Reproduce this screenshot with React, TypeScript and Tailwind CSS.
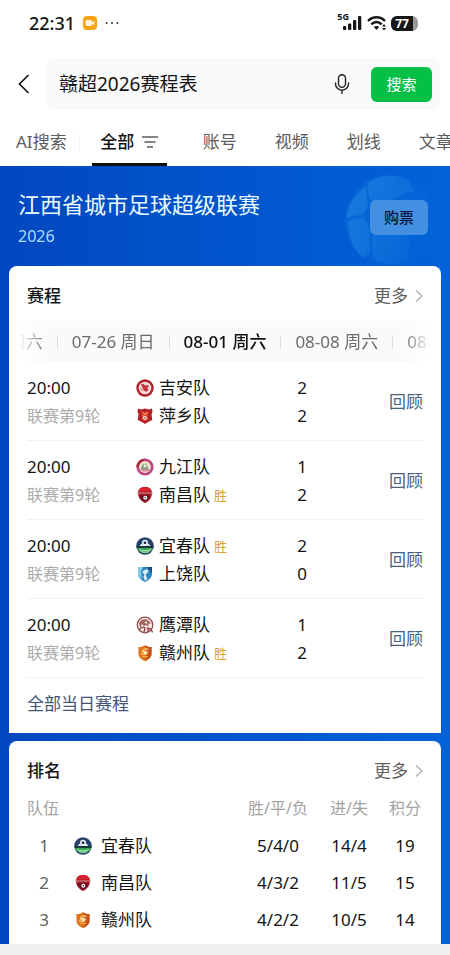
import type { ReactNode } from 'react';

type TeamName = '吉安队' | '萍乡队' | '九江队' | '南昌队' | '宜春队' | '上饶队' | '鹰潭队' | '赣州队';

interface Side {
  team: TeamName;
  score: number;
  won?: boolean;
}

interface Match {
  time: string;
  round: string;
  sides: Side[];
}

const tabs = ['账号', '视频', '划线', '文章'];

const dates = ['07-25 周六', '07-26 周日', '08-01 周六', '08-08 周六', '08-09 周日'];

const matches: Match[] = [
  { time: '20:00', round: '联赛第9轮', sides: [{ team: '吉安队', score: 2 }, { team: '萍乡队', score: 2 }] },
  { time: '20:00', round: '联赛第9轮', sides: [{ team: '九江队', score: 1 }, { team: '南昌队', score: 2, won: true }] },
  { time: '20:00', round: '联赛第9轮', sides: [{ team: '宜春队', score: 2, won: true }, { team: '上饶队', score: 0 }] },
  { time: '20:00', round: '联赛第9轮', sides: [{ team: '鹰潭队', score: 1 }, { team: '赣州队', score: 2, won: true }] },
];

const standings: { team: TeamName; record: string; goals: string; points: number }[] = [
  { team: '宜春队', record: '5/4/0', goals: '14/4', points: 19 },
  { team: '南昌队', record: '4/3/2', goals: '11/5', points: 15 },
  { team: '赣州队', record: '4/2/2', goals: '10/5', points: 14 },
];

const badges: Record<TeamName, ReactNode> = {
  吉安队: (
    <>
      <circle cx="9" cy="9" r="8.700" fill="#b3202c" />
      <circle cx="9" cy="9" r="6.300" fill="#f3dcda" />
      <path d="M5 5c2-1 3 .5 4.500 1.500L12 6l1 2-2 .5 1.500 2-2 2.500-2.500-1.500L6.500 9z" fill="#c43540" />
      <path d="M4.500 9.500l2 2.500M7.500 9.800l2.500-.8 1 1.500" stroke="#c43540" strokeWidth=".9" fill="none" />
    </>
  ),
  萍乡队: (
    <>
      <path d="M2 1.500l3 1 4-1 4 1 3-1 .5 3-1 3 .8 5.500-4.300 2-3 2-3-2-4.300-2 .8-5.500-1-3z" fill="#b32025" />
      <path d="M5 4l3 2 3-2 2 2-1.500 3 1 3-3.500 2-3.500-2 1-3z" fill="#e0452f" />
      <path d="M7 5l2 3 2-3M6 8l1.500 2" stroke="#f3b07d" strokeWidth=".8" fill="none" />
      <circle cx="9" cy="11" r="2" fill="#fbe3dc" />
      <circle cx="9" cy="11" r=".8" fill="#8d1a1d" />
    </>
  ),
  九江队: (
    <>
      <circle cx="9" cy="9" r="8.600" fill="#c0417f" />
      <path d="M9 .4a8.600 8.600 0 0 0-8.600 8.600h3z" fill="#a52a35" />
      <circle cx="9" cy="9" r="6" fill="#eadfc9" />
      <path d="M5 10l2-4 2 1 1-2 2 5 1 2H5z" fill="#7d9a7b" />
      <path d="M4 11h10l-1.500 2.500h-6z" fill="#d68b9c" />
      <circle cx="9" cy="8" r="1.500" fill="#f8eedb" />
    </>
  ),
  南昌队: (
    <>
      <path d="M9 1c4 0 6.500 2 7 5.500 0 5-2.500 8.500-7 10.500-4.500-2-7-5.500-7-10.500C2.500 3 5 1 9 1z" fill="#a5182b" />
      <path d="M9 1c4 0 6.300 2 6.800 4.500H2.200C2.700 3 5 1 9 1z" fill="#d6232f" />
      <path d="M1.500 6h15v2h-15z" fill="#dd8583" />
      <path d="M2.500 7h13" stroke="#8d1526" strokeWidth=".8" />
      <path d="M4 9.500h10c-.5 3-2.500 5-5 6-2.500-1-4.500-3-5-6z" fill="#5a101f" />
      <circle cx="9.300" cy="11.800" r="2" fill="#fff" />
      <circle cx="9.300" cy="11.800" r=".8" fill="#5a101f" />
    </>
  ),
  宜春队: (
    <>
      <circle cx="9" cy="9" r="8.700" fill="#27406b" />
      <path d="M.8 10.500h16.400A8.700 8.700 0 0 1 .8 10.500z" fill="#3aa655" />
      <circle cx="9" cy="5.800" r="3" fill="#e9f0f5" />
      <path d="M9 4.300l1.500 1-.6 1.700H8.100l-.6-1.700z" fill="#1f2f55" />
      <path d="M3.500 9l2-2.500 2 1.500h3l2-1.500 2 2.500z" fill="#dfe9f2" />
      <path d="M.5 9h17v1.800H.5z" fill="#12352f" />
      <path d="M3 12.500c4 1.500 8 1.500 12 0M5 14.500c3 1 5 1 8 0" stroke="#b9eac2" strokeWidth=".9" fill="none" />
    </>
  ),
  上饶队: (
    <>
      <path d="M2 2h14v7c0 3.500-3 6-7 8-4-2-7-4.500-7-8z" fill="#2c86c4" />
      <path d="M2 2h5L5 7l1 7C3.500 12.500 2 11 2 9z" fill="#7fcbe8" />
      <path d="M7 6l4-2 1.500 2-1.500 2.500-1.500 1 2 4.500-2.500 2L7.500 12l1-3-2-1z" fill="#d9f2fb" />
      <path d="M11 2h5v6l-3-3z" fill="#1a4f8c" />
    </>
  ),
  鹰潭队: (
    <>
      <circle cx="9" cy="9" r="7.800" fill="#f6e9e6" stroke="#8c4a48" strokeWidth="1.200" />
      <path d="M3 7c2-4 7-5 10-2l2 3-3-.5 1 3-3-1.500-2 1L6 8l-2 4z" fill="#a2635f" />
      <path d="M3 14c2-3 4-3.500 6-2l-1 4M11 12l4 1 1.500 3.500M12 12v4" stroke="#903c3b" strokeWidth="1.300" fill="none" />
      <circle cx="10" cy="6.500" r="1.100" fill="#fff" />
    </>
  ),
  赣州队: (
    <>
      <path d="M2.500 3c2.500 0 4.500-.5 6.500-1.800C11 2.500 13 3 15.500 3v7c0 3.500-3 5.500-6.500 7-3.500-1.500-6.500-3.500-6.500-7z" fill="#e0741d" />
      <path d="M9 1.200C11 2.500 13 3 15.500 3v7c0 3.500-3 5.500-6.500 7l3-7z" fill="#c4511a" />
      <path d="M12.500 5.500c-3-1.500-6 0-6 2.500 2-1 4-.5 5 .5-1 2-4 2-6.500 1.500" stroke="#ffd98a" strokeWidth="1.200" fill="none" />
      <circle cx="9" cy="9" r="1.300" fill="#fff1cf" />
      <path d="M6 12.500h6" stroke="#f6b04a" strokeWidth="1" />
    </>
  ),
};

function TeamBadge({ team }: { team: TeamName }) {
  return (
    <svg className="size-[18px] shrink-0" viewBox="0 0 18 18" aria-hidden="true">
      {badges[team]}
    </svg>
  );
}

function StatusBar() {
  return (
    <div className="flex h-[46px] items-center justify-between pr-8 pl-[29px]">
      <div className="flex items-center">
        <span className="text-lg leading-6 font-medium">22:31</span>
        <svg className="ml-2 size-[14px]" viewBox="0 0 14 14" aria-hidden="true">
          <rect width="14" height="14" rx="4" fill="#f5a414" />
          <rect x="2.500" y="4" width="6.500" height="6" rx="1.500" fill="#fff6dc" />
          <path d="M9 6.500l2.500-1.700v4.400L9 7.500z" fill="#fff6dc" />
        </svg>
        <svg className="ml-2 h-1 w-[14px]" viewBox="0 0 14 4" fill="#333" aria-hidden="true">
          <circle cx="1.500" cy="2" r="1" />
          <circle cx="7" cy="2" r="1" />
          <circle cx="12.500" cy="2" r="1" />
        </svg>
      </div>
      <div className="flex items-center">
        <span className="mb-3 text-[9px] leading-3 font-bold">5G</span>
        <svg className="-ml-1.5 h-4 w-5" viewBox="0 0 20 16" fill="#181818" aria-hidden="true">
          <rect x="0" y="11" width="3.300" height="4" rx="1" />
          <rect x="5" y="8.500" width="3.300" height="6.500" rx="1" />
          <rect x="10" y="5" width="3.300" height="10" rx="1" />
          <rect x="15" y="1" width="3.300" height="14" rx="1" />
        </svg>
        <svg className="ml-1 h-4 w-5" viewBox="0 0 20 16" fill="none" stroke="#181818" aria-hidden="true">
          <path d="M1 6c4.800-5 12.200-5 17 0" strokeWidth="2.400" />
          <path d="M4.300 9.300c3-3 7.400-3 10.400 0" strokeWidth="2.400" />
          <path d="M9.500 15L6.800 12c1.500-1.400 3.900-1.400 5.400 0z" fill="#181818" stroke="none" />
          <path d="M15 11.500l2-2.500 2 2.500zM15 13l2 2.500 2-2.500z" fill="#181818" stroke="none" />
        </svg>
        <div className="ml-1 flex h-[15px] w-[27px] overflow-hidden rounded-md bg-[#9a9a9a]">
          <span className="w-[22px] bg-[#181818] text-center text-xs leading-[15px] font-bold text-white">77</span>
        </div>
      </div>
    </div>
  );
}

function SearchBar() {
  return (
    <div className="flex items-center pt-3 pr-[10px] pb-2 pl-[18px]">
      <button type="button" aria-label="返回" className="shrink-0">
        <svg className="h-5 w-3" viewBox="0 0 12 20" fill="none" stroke="#181818" strokeWidth="1.700" aria-hidden="true">
          <path d="M10.500 1L1.500 10l9 9" />
        </svg>
      </button>
      <form className="ml-[17px] flex h-[52px] min-w-0 flex-1 items-center rounded-lg bg-[#fafafa] pr-2 pl-3">
        <input
          type="text"
          aria-label="搜索"
          defaultValue="赣超2026赛程表"
          className="min-w-0 flex-1 bg-transparent text-[19px] leading-7 outline-none"
        />
        <button type="button" aria-label="语音输入">
          <svg className="h-5 w-4" viewBox="0 0 16 20" fill="none" stroke="#222" strokeWidth="1.400" aria-hidden="true">
            <rect x="4.500" y=".8" width="7" height="12.400" rx="3.500" />
            <path d="M1.500 8.500v1.200a6.500 6.500 0 0 0 13 0V8.500M8 16.200V20" />
          </svg>
        </button>
        <button type="button" className="ml-[21px] h-[35px] w-[61px] rounded-md bg-[#05c047] text-[15px] text-white">
          搜索
        </button>
      </form>
    </div>
  );
}

function TabBar() {
  return (
    <nav className="flex h-12 items-center overflow-hidden pl-4 text-[17px] whitespace-nowrap text-[#5c5c5c]">
      <button type="button" className="shrink-0">AI搜索</button>
      <span className="ml-3 h-4 w-px shrink-0 bg-[#f4f4f4]" />
      <button
        type="button"
        className="ml-3 flex h-12 w-[75px] shrink-0 items-center justify-center gap-2 border-y-3 border-t-transparent border-b-[#111] font-medium text-[#111]"
      >
        全部
        <svg className="h-3 w-4" viewBox="0 0 16 12" stroke="#5c5c5c" strokeWidth="1.400" aria-hidden="true">
          <path d="M0 1h16M2.500 6h11M5 11h6" />
        </svg>
      </button>
      <div className="ml-9 flex gap-[38px]">
        {tabs.map((tab) => (
          <button key={tab} type="button" className="shrink-0">
            {tab}
          </button>
        ))}
      </div>
    </nav>
  );
}

function Football() {
  return (
    <svg className="absolute top-2 right-3 size-[94px]" viewBox="0 0 94 94" aria-hidden="true">
      <defs>
        <linearGradient id="ball" gradientUnits="userSpaceOnUse" x1="0" y1="20" x2="90" y2="60">
          <stop offset="0" stopColor="#2d9bea" stopOpacity=".4" />
          <stop offset="1" stopColor="#2d9bea" stopOpacity=".03" />
        </linearGradient>
      </defs>
      <circle cx="47" cy="47" r="46" fill="url(#ball)" opacity=".4" />
      <g fill="url(#ball)">
        <path d="M25 8C37 0 53 0 65 7l5 11c-9 0-14 3-20 7-8 3-16 3-24 1-2-6-3-12-1-18z" />
        <path d="M23 12C12 19 4 31 2 44c5-2 11-3 17-3 3-5 5-9 5-14-2-5-2-10-1-15z" />
        <path d="M4 48c5-3 10-4 15-4 4 4 6 8 7 13v21l-7 6C9 75 4 62 4 48z" />
        <path d="M29 58c12-3 23-3 34 0 3 9 3 19 0 29-12 5-24 4-34-3-1-9-1-18 0-26z" />
      </g>
    </svg>
  );
}

function CardHeader({ title }: { title: string }) {
  return (
    <div className="flex items-center justify-between px-[18px] pt-4 text-[17px] leading-7">
      <h2 className="font-medium">{title}</h2>
      <a href="#more" className="flex items-center gap-[7px] text-[#5f5f5f]">
        更多
        <svg className="h-3 w-2" viewBox="0 0 8 12" fill="none" stroke="#b0b0b0" strokeWidth="1.400" aria-hidden="true">
          <path d="M1 .5L7 6l-6 5.500" />
        </svg>
      </a>
    </div>
  );
}

function DateStrip() {
  return (
    <div className="mx-2.5 mt-[11px] flex h-[41px] items-center justify-center overflow-hidden bg-[#fafafa] text-[17px] whitespace-nowrap text-[#6b6b6b] [mask-image:linear-gradient(to_right,transparent,black_28px,black_calc(100%-28px),transparent)]">
      {dates.map((date, i) => (
        <div key={date} className="flex shrink-0 items-center">
          {i > 0 && <span className="mx-3.5 h-3.5 w-px bg-[#dedede]" />}
          <button type="button" className={date === '08-01 周六' ? 'font-medium text-[#111]' : ''}>
            {date}
          </button>
        </div>
      ))}
    </div>
  );
}

function MatchRow({ match }: { match: Match }) {
  return (
    <li className="flex items-center border-b border-[#f0f0f0] pt-3 pb-2.5 text-[17px] leading-7">
      <div className="w-[109px]">
        <p>{match.time}</p>
        <p className="text-base leading-7 text-[#ababab]">{match.round}</p>
      </div>
      <div className="flex-1">
        {match.sides.map((side) => (
          <div key={side.team} className="flex items-center">
            <TeamBadge team={side.team} />
            <span className="ml-[5px]">{side.team}</span>
            {side.won && <span className="ml-1 text-[13px] leading-7 text-[#dba035]">胜</span>}
          </div>
        ))}
      </div>
      <div className="w-6 text-center">
        {match.sides.map((side) => (
          <p key={side.team}>{side.score}</p>
        ))}
      </div>
      <div className="w-[109px] text-right">
        <a href="#review" className="text-[#4c5f7d]">回顾</a>
      </div>
    </li>
  );
}

function Schedule() {
  return (
    <section className="rounded-t-lg bg-white">
      <CardHeader title="赛程" />
      <DateStrip />
      <ul className="px-[18px]">
        {matches.map((match) => (
          <MatchRow key={match.sides[0].team} match={match} />
        ))}
      </ul>
      <a href="#all" className="block px-[18px] pt-3 pb-[15px] text-[17px] leading-7 text-[#43557a]">
        全部当日赛程
      </a>
    </section>
  );
}

function Standings() {
  return (
    <section className="rounded-t-lg bg-white pb-1.5">
      <CardHeader title="排名" />
      <div className="px-[18px] pt-1">
        <table className="w-full table-fixed text-center text-[17px] whitespace-nowrap">
          <thead>
            <tr className="h-[38px] text-base text-[#a3a3a3]">
              <th className="text-left font-normal">队伍</th>
              <th className="w-[66px] font-normal">胜/平/负</th>
              <th className="w-[76px] font-normal">进/失</th>
              <th className="w-9 font-normal">积分</th>
            </tr>
          </thead>
          <tbody>
            {standings.map((row, i) => (
              <tr key={row.team} className="h-[37px]">
                <td>
                  <div className="flex items-center">
                    <span className="w-[34px] text-[#5f5f5f]">{i + 1}</span>
                    <span className="ml-[13px]">
                      <TeamBadge team={row.team} />
                    </span>
                    <span className="ml-[9px]">{row.team}</span>
                  </div>
                </td>
                <td>{row.record}</td>
                <td>{row.goals}</td>
                <td>{row.points}</td>
              </tr>
            ))}
          </tbody>
        </table>
      </div>
    </section>
  );
}

export default function App() {
  return (
    <div className="min-h-screen bg-[#efefef] font-['Noto_Sans','Noto_Sans_CJK_SC',sans-serif] text-[#141414]">
      <header className="bg-white">
        <StatusBar />
        <SearchBar />
        <TabBar />
      </header>
      <main className="relative bg-linear-to-r from-[#0247c0] to-[#0262d8] px-[9px]">
        <Football />
        <div className="relative flex h-[100px] items-start justify-between px-[9px] pt-[22px]">
          <div className="text-[#eafcff]">
            <h1 className="text-[22px] leading-8">江西省城市足球超级联赛</h1>
            <p className="mt-1 text-base leading-6 text-[#a9dcff]">2026</p>
          </div>
          <button type="button" className="mt-3 mr-1 h-[35px] w-[58px] rounded-md bg-[#4390e2] text-[15px] font-medium text-[#07163f]">
            购票
          </button>
        </div>
        <div className="relative flex flex-col gap-2">
          <Schedule />
          <Standings />
        </div>
      </main>
    </div>
  );
}
